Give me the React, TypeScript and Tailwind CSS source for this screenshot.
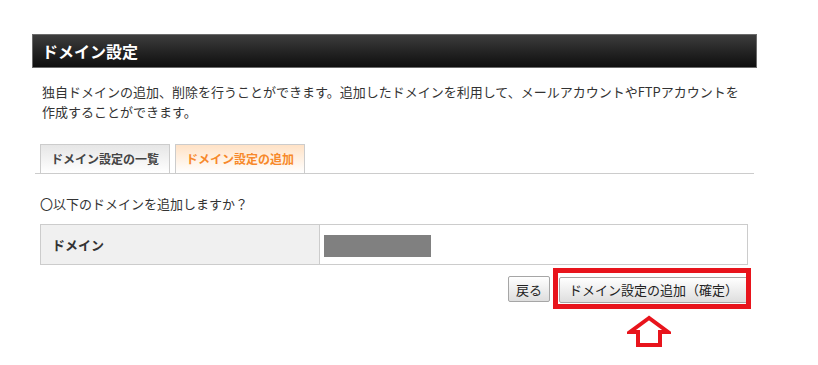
import * as React from "react";

const font = { fontFamily: '"Noto Sans CJK JP", "Noto Sans", sans-serif' };

function UpArrow() {
  return (
    <svg width="44" height="32" viewBox="0 0 44 32" className="absolute left-[68px] top-[39px]">
      <polygon
        points="22,3 3,17 11,17 11,30 33,30 33,17 41,17"
        fill="#fff"
        stroke="#e8141c"
        strokeWidth="4"
        strokeLinejoin="miter"
      />
    </svg>
  );
}

export default function App() {
  return (
    <div className="min-h-[365px] bg-white pt-[34px] pl-[32px] text-[#333]" style={font}>
      <div className="w-[725px]">
        <div className="flex h-[34px] items-center border border-[#6b6b6b] bg-gradient-to-b from-[#3d3d3d] to-[#0f0f0f] pl-[9px]">
          <h1 className="text-[16px] font-bold leading-none text-white">ドメイン設定</h1>
        </div>

        <p className="mt-[14px] px-[10px] text-[13px] leading-[20px]">
          独自ドメインの追加、削除を行うことができます。追加したドメインを利用して、メールアカウントやFTPアカウントを
          <br />
          作成することができます。
        </p>

        <div className="mx-[3px] mt-[22px] flex gap-[5px] border-b border-[#cccccc] pl-[5px]">
          <div className="flex h-[29px] w-[130px] items-center justify-center border border-b-0 border-[#cccccc] bg-gradient-to-b from-[#e6e6e6] to-white text-[12px] font-bold text-[#444]">
            ドメイン設定の一覧
          </div>
          <div className="flex h-[29px] w-[130px] items-center justify-center border border-b-0 border-[#cccccc] bg-gradient-to-b from-[#ffe2c6] to-white text-[12px] font-bold text-[#f7892a]">
            ドメイン設定の追加
          </div>
        </div>

        <p className="mt-[20px] pl-[8px] text-[13px] leading-[20px]">〇以下のドメインを追加しますか？</p>

        <div className="mt-[10px] ml-[8px] flex h-[41px] w-[708px] border border-[#cccccc]">
          <div className="flex w-[279px] items-center border-r border-[#cccccc] bg-[#f0f0f0] pl-[11px] text-[13px] font-bold">
            ドメイン
          </div>
          <div className="flex flex-1 items-center pl-[4px] pt-[2px]">
            <div className="h-[22px] w-[107px] bg-[#808080]" />
          </div>
        </div>

        <div className="mt-[11px] ml-[8px] flex w-[708px] justify-end gap-[9px]">
          <button className="h-[26px] rounded-[2px] border border-[#a6a6a6] bg-gradient-to-b from-white to-[#dedede] px-[7px] text-[13px] leading-none text-[#222]">
            戻る
          </button>
          <div className="relative">
            <button className="h-[26px] w-[189px] rounded-[2px] border border-[#a6a6a6] bg-gradient-to-b from-white to-[#dedede] text-[13px] leading-none text-[#222]">
              ドメイン設定の追加（確定）
            </button>
            <div className="pointer-events-none absolute -top-[8px] -right-[3px] -bottom-[6px] -left-[6px] border-[5px] border-[#e8141c]" />
            <UpArrow />
          </div>
        </div>
      </div>
    </div>
  );
}
